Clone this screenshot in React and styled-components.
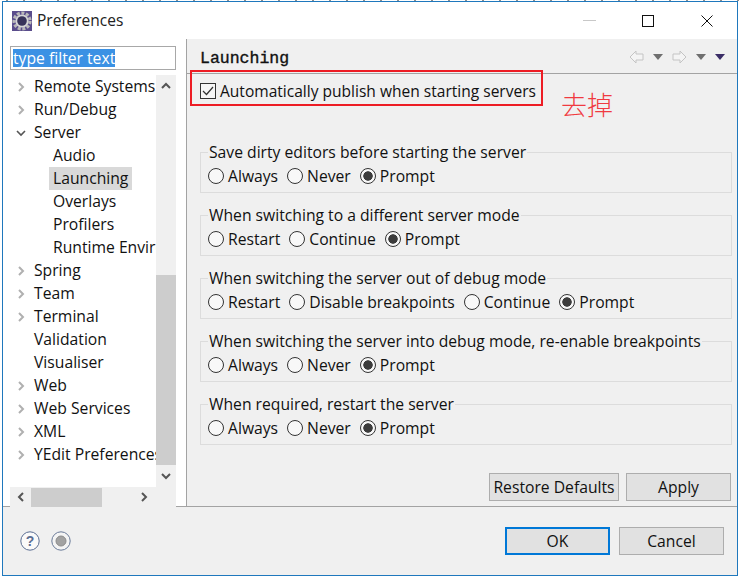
import React from "react";
import styled, { createGlobalStyle } from "styled-components";

const GlobalStyle = createGlobalStyle`
  html, body {
    margin: 0;
    padding: 0;
    background: #fff;
    overflow: hidden;
  }
  body {
    font-family: "Open Sans", "Noto Sans", sans-serif;
    font-size: 15.7px;
    color: #111;
  }
`;

const treeItems = [
  { label: "Remote Systems", arrow: "closed" },
  { label: "Run/Debug", arrow: "closed" },
  { label: "Server", arrow: "open" },
  { label: "Audio", child: true },
  { label: "Launching", child: true, selected: true },
  { label: "Overlays", child: true },
  { label: "Profilers", child: true },
  { label: "Runtime Environments", child: true },
  { label: "Spring", arrow: "closed" },
  { label: "Team", arrow: "closed" },
  { label: "Terminal", arrow: "closed" },
  { label: "Validation" },
  { label: "Visualiser" },
  { label: "Web", arrow: "closed" },
  { label: "Web Services", arrow: "closed" },
  { label: "XML", arrow: "closed" },
  { label: "YEdit Preferences", arrow: "closed" },
];

const groups = [
  { title: "Save dirty editors before starting the server", options: ["Always", "Never", "Prompt"] },
  { title: "When switching to a different server mode", options: ["Restart", "Continue", "Prompt"] },
  { title: "When switching the server out of debug mode", options: ["Restart", "Disable breakpoints", "Continue", "Prompt"] },
  { title: "When switching the server into debug mode, re-enable breakpoints", options: ["Always", "Never", "Prompt"] },
  { title: "When required, restart the server", options: ["Always", "Never", "Prompt"] },
];

function Chevron({ dir, color = "#555", size = 12, weight = 2 }) {
  const points = {
    right: "4,2 8,6 4,10",
    left: "8,2 4,6 8,10",
    down: "2,4 6,8 10,4",
    up: "2,8 6,4 10,8",
  };
  return (
    <svg width={size} height={size} viewBox="0 0 12 12">
      <polyline points={points[dir]} fill="none" stroke={color} strokeWidth={weight} />
    </svg>
  );
}

function GearLogo() {
  return (
    <svg width="20" height="20" viewBox="0 0 20 20">
      <rect width="20" height="20" fill="#5a4d8c" />
      <circle cx="10" cy="10" r="8" fill="none" stroke="#b8b8b8" strokeWidth="3.2" strokeDasharray="3 1.6" />
      <circle cx="10" cy="10" r="6.6" fill="#d6d6d6" />
      <circle cx="10" cy="10" r="4.8" fill="#37335a" />
    </svg>
  );
}

function NavArrow({ dir }) {
  const points = dir === "left" ? "1,7 7,1 7,4 14,4 14,10 7,10 7,13" : "14,7 8,1 8,4 1,4 1,10 8,10 8,13";
  return (
    <svg width="15" height="14" viewBox="0 0 15 14">
      <polygon points={points} fill="#f4f4f4" stroke="#c4c4c4" />
    </svg>
  );
}

export default function App() {
  return (
    <>
      <GlobalStyle />
      <Screen>
        <BehindStrip />
        <Dialog>
          <TitleBar>
            <GearLogo />
            <TitleText>Preferences</TitleText>
            <WindowControls>
              <MinimizeGlyph />
              <MaximizeGlyph />
              <svg width="12" height="12" viewBox="0 0 12 12">
                <path d="M0.5 0.5 L11.5 11.5 M11.5 0.5 L0.5 11.5" stroke="#111" strokeWidth="1" />
              </svg>
            </WindowControls>
          </TitleBar>

          <Body>
            <Sidebar>
              <FilterBox>
                <FilterSelection>type filter text</FilterSelection>
              </FilterBox>
              <TreeFrame>
                <Tree>
                  {treeItems.map((item) => (
                    <TreeRow key={item.label} $child={item.child}>
                      {!item.child && (
                        <TreeArrow>
                          {item.arrow === "closed" && <Chevron dir="right" color="#b0b0b0" />}
                          {item.arrow === "open" && <Chevron dir="down" color="#555" weight={1.6} />}
                        </TreeArrow>
                      )}
                      <TreeLabel $selected={item.selected}>{item.label}</TreeLabel>
                    </TreeRow>
                  ))}
                </Tree>
                <VScroll>
                  <ScrollEnd>
                    <Chevron dir="up" />
                  </ScrollEnd>
                  <VTrack>
                    <VThumb />
                  </VTrack>
                  <ScrollEnd>
                    <Chevron dir="down" />
                  </ScrollEnd>
                </VScroll>
              </TreeFrame>
              <HScroll>
                <HEnd>
                  <Chevron dir="left" />
                </HEnd>
                <HThumb />
                <HEnd $right>
                  <Chevron dir="right" />
                </HEnd>
              </HScroll>
            </Sidebar>

            <Main>
              <HeadRow>
                <Heading>Launching</Heading>
                <NavTools>
                  <NavArrow dir="left" />
                  <Caret />
                  <NavArrow dir="right" />
                  <Caret />
                  <Caret $dark />
                </NavTools>
              </HeadRow>

              <Content>
                <PublishRow>
                  <Checkbox>
                    <svg width="12" height="10" viewBox="0 0 12 10">
                      <polyline points="1,5 4.5,8.5 11,1" fill="none" stroke="#333" strokeWidth="1.2" />
                    </svg>
                  </Checkbox>
                  Automatically publish when starting servers
                  <RedBox />
                  <RedNote>去掉</RedNote>
                </PublishRow>

                <Groups>
                  {groups.map((group) => (
                    <Group key={group.title}>
                      <GroupTitle>{group.title}</GroupTitle>
                      <RadioRow>
                        {group.options.map((option) => (
                          <RadioItem key={option}>
                            <Radio $on={option === "Prompt"} />
                            {option}
                          </RadioItem>
                        ))}
                      </RadioRow>
                    </Group>
                  ))}
                </Groups>

                <PageButtons>
                  <Button $width={130}>Restore Defaults</Button>
                  <Button $width={105}>Apply</Button>
                </PageButtons>
              </Content>
            </Main>
          </Body>

          <Footer>
            <HelpIcons>
              <svg width="20" height="20" viewBox="0 0 20 20">
                <circle cx="10" cy="10" r="9.2" fill="#fafafa" stroke="#5a6d92" strokeWidth="1" />
                <text x="10" y="15" textAnchor="middle" fontSize="14" fontWeight="700" fill="#5a6d92" fontFamily="Liberation Sans">?</text>
              </svg>
              <svg width="20" height="20" viewBox="0 0 20 20">
                <circle cx="10" cy="10" r="9.2" fill="#f4f4f4" stroke="#6a7a98" strokeWidth="1" />
                <circle cx="10" cy="10" r="5" fill="#a2a2a2" stroke="#8c8c8c" />
              </svg>
            </HelpIcons>
            <FooterButtons>
              <Button $width={105} $primary>OK</Button>
              <Button $width={105}>Cancel</Button>
            </FooterButtons>
          </Footer>
        </Dialog>
      </Screen>
    </>
  );
}

const Screen = styled.div`
  width: 739px;
  height: 576px;
  display: flex;
  flex-direction: column;
  background: #fff;
`;

const BehindStrip = styled.div`
  height: 1px;
  background: repeating-linear-gradient(90deg, #fff 0 6px, #8d8d8d 6px 8px, #fff 8px 17px);
`;

const Dialog = styled.div`
  flex: 1;
  min-height: 0;
  margin: 0 1px 0 2px;
  display: flex;
  flex-direction: column;
  border: 1px solid #1f78bd;
`;

const TitleBar = styled.div`
  height: 37px;
  flex: none;
  display: flex;
  align-items: center;
  padding: 0 0 0 9px;
  background: #fff;
`;

const TitleText = styled.div`
  margin-left: 5px;
  margin-top: -2px;
  font-size: 15.5px;
  color: #222;
`;

const WindowControls = styled.div`
  margin-left: auto;
  width: 154px;
  padding-right: 24px;
  box-sizing: border-box;
  display: flex;
  align-items: center;
  justify-content: space-between;
`;

const MinimizeGlyph = styled.div`
  width: 13px;
  height: 1px;
  background: #c8c8c8;
`;

const MaximizeGlyph = styled.div`
  width: 10px;
  height: 10px;
  margin-right: 1px;
  border: 1px solid #111;
`;

const Body = styled.div`
  height: 468px;
  flex: none;
  box-sizing: border-box;
  display: flex;
  border-bottom: 1px solid #a3a3a3;
`;

const Sidebar = styled.div`
  width: 184px;
  flex: none;
  box-sizing: border-box;
  padding: 7px 0 0 7px;
  background: #fff;
  border-right: 1px solid #a3a3a3;
  display: flex;
  flex-direction: column;
`;

const FilterBox = styled.div`
  width: 166px;
  height: 24px;
  flex: none;
  box-sizing: border-box;
  border: 1px solid #a8a8a8;
  padding: 2px 2px;
  display: flex;
`;

const FilterSelection = styled.span`
  background: #3b91e4;
  color: #fff;
  line-height: 18px;
  white-space: nowrap;
`;

const TreeFrame = styled.div`
  width: 166px;
  height: 412px;
  flex: none;
  margin-top: 5px;
  display: flex;
`;

const Tree = styled.div`
  width: 146px;
  flex: none;
  overflow: hidden;
  background: #fff;
`;

const TreeRow = styled.div`
  height: 23px;
  display: flex;
  align-items: center;
  white-space: nowrap;
  padding-left: ${(props) => (props.$child ? "39px" : "5px")};
`;

const TreeArrow = styled.span`
  width: 14px;
  flex: none;
  display: flex;
  margin-right: 1px;
`;

const TreeLabel = styled.span`
  line-height: 23px;
  padding: 0 4px;
  background: ${(props) => (props.$selected ? "#d9d9d9" : "transparent")};
`;

const VScroll = styled.div`
  width: 20px;
  flex: none;
  display: flex;
  flex-direction: column;
  background: #f0f0f0;
`;

const ScrollEnd = styled.div`
  height: 22px;
  flex: none;
  display: flex;
  align-items: center;
  justify-content: center;
`;

const VTrack = styled.div`
  flex: 1;
  display: flex;
  flex-direction: column;
  justify-content: flex-end;
`;

const VThumb = styled.div`
  height: 190px;
  background: #cdcdcd;
`;

const HScroll = styled.div`
  width: 166px;
  height: 20px;
  flex: none;
  display: flex;
  align-items: center;
  background: #f0f0f0;
`;

const HEnd = styled.div`
  width: 21px;
  height: 20px;
  flex: none;
  display: flex;
  align-items: center;
  justify-content: center;
  margin-left: ${(props) => (props.$right ? "auto" : "0")};
  margin-right: ${(props) => (props.$right ? "22px" : "0")};
`;

const HThumb = styled.div`
  width: 71px;
  height: 19px;
  background: #cdcdcd;
`;

const Main = styled.div`
  flex: 1;
  min-width: 0;
  background: #f0f0f0;
  display: flex;
  flex-direction: column;
`;

const HeadRow = styled.div`
  height: 35px;
  flex: none;
  box-sizing: border-box;
  display: flex;
  align-items: center;
  justify-content: space-between;
  padding: 2px 12px 0 13px;
  border-bottom: 1px solid #a3a3a3;
`;

const Heading = styled.div`
  margin-top: 2px;
  font-family: "Liberation Mono", monospace;
  font-size: 16.5px;
  -webkit-text-stroke: 0.35px #111;
  color: #111;
`;

const NavTools = styled.div`
  display: flex;
  align-items: center;
  gap: 9px;
`;

const Caret = styled.div`
  width: 0;
  height: 0;
  border-left: 5px solid transparent;
  border-right: 5px solid transparent;
  border-top: 6px solid ${(props) => (props.$dark ? "#3a2d66" : "#6f6f6f")};
`;

const Content = styled.div`
  flex: 1;
  display: flex;
  flex-direction: column;
  padding: 7px 5px 0 13px;
`;

const PublishRow = styled.div`
  position: relative;
  height: 20px;
  display: flex;
  align-items: center;
  font-size: 15.56px;
  white-space: nowrap;
  color: #111;
`;

const Checkbox = styled.span`
  width: 14px;
  height: 14px;
  flex: none;
  margin-right: 4px;
  border: 1px solid #333;
  background: #f6f6f6;
  display: flex;
  align-items: center;
  justify-content: center;
`;

const RedBox = styled.div`
  position: absolute;
  left: -10px;
  top: -11px;
  width: 353px;
  height: 36px;
  box-sizing: border-box;
  border: 2px solid #ed1c24;
`;

const RedNote = styled.div`
  position: absolute;
  left: 361px;
  top: 8px;
  font-family: "Noto Sans CJK SC", sans-serif;
  font-size: 26px;
  font-weight: 300;
  line-height: 30px;
  color: #f03a40;
`;

const Groups = styled.div`
  margin-top: 41px;
  display: flex;
  flex-direction: column;
  gap: 12px;
`;

const Group = styled.fieldset`
  margin: 0;
  padding: 0 7px 0 7px;
  height: 51px;
  box-sizing: border-box;
  border: 1px solid #dcdcdc;
  min-width: 0;
`;

const GroupTitle = styled.legend`
  padding: 0 1px;
  line-height: 20px;
  white-space: nowrap;
  color: #111;
`;

const RadioRow = styled.div`
  display: flex;
  gap: 9px;
  margin-top: 3px;
`;

const RadioItem = styled.label`
  display: flex;
  align-items: center;
  gap: 4px;
  line-height: 22px;
  white-space: nowrap;
  color: #111;
`;

const Radio = styled.span`
  width: 16px;
  height: 16px;
  flex: none;
  box-sizing: border-box;
  border-radius: 50%;
  border: 1px solid #333;
  background: ${(props) =>
    props.$on
      ? "radial-gradient(circle, #3c3c3c 0 4.4px, transparent 5px), #f8f8f8"
      : "#f8f8f8"};
`;

const PageButtons = styled.div`
  margin-top: auto;
  margin-bottom: 5px;
  margin-right: 1px;
  display: flex;
  justify-content: flex-end;
  gap: 7px;
`;

const Button = styled.button`
  width: ${(props) => props.$width}px;
  height: 28px;
  box-sizing: border-box;
  padding: 0;
  font-family: inherit;
  font-size: 15.7px;
  color: #111;
  background: #e1e1e1;
  border: ${(props) => (props.$primary ? "2px solid #0078d7" : "1px solid #adadad")};
`;

const Footer = styled.div`
  flex: 1;
  min-height: 0;
  display: flex;
  align-items: center;
  justify-content: space-between;
  background: #f0f0f0;
  padding: 0 13px 0 17px;
`;

const HelpIcons = styled.div`
  display: flex;
  gap: 11px;
`;

const FooterButtons = styled.div`
  display: flex;
  gap: 9px;
`;
